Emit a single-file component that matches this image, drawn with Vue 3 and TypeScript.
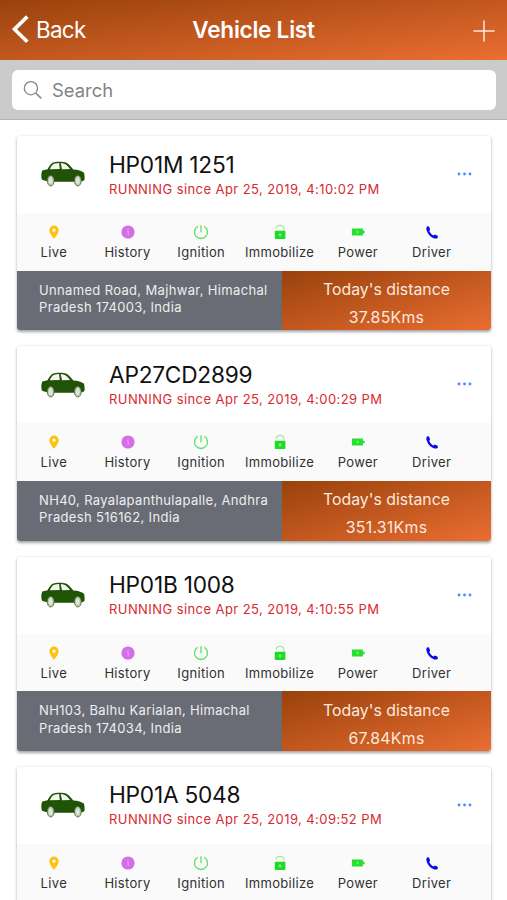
<script setup lang="ts">
interface Vehicle {
  name: string
  since: string
  address?: [string, string]
  distance?: string
}

const vehicles: Vehicle[] = [
  { name: 'HP01M 1251', since: '4:10:02 PM', address: ['Unnamed Road, Majhwar, Himachal', 'Pradesh 174003, India'], distance: '37.85Kms' },
  { name: 'AP27CD2899', since: '4:00:29 PM', address: ['NH40, Rayalapanthulapalle, Andhra', 'Pradesh 516162, India'], distance: '351.31Kms' },
  { name: 'HP01B 1008', since: '4:10:55 PM', address: ['NH103, Balhu Karialan, Himachal', 'Pradesh 174034, India'], distance: '67.84Kms' },
  { name: 'HP01A 5048', since: '4:09:52 PM' },
]

const actions: string[] = ['Live', 'History', 'Ignition', 'Immobilize', 'Power', 'Driver']
</script>

<template>
  <div class="screen">
    <header class="navbar">
      <button class="back">
        <svg width="18" height="30" viewBox="0 0 18 30"><path d="M15.300 1.600 2.500 14.200l12.800 12.600" fill="none" stroke="#fff" stroke-width="3.7" /></svg>
        <span>Back</span>
      </button>
      <h1>Vehicle List</h1>
      <button class="add">
        <svg width="22" height="22" viewBox="0 0 22 22"><path d="M11 .5v21M.5 11h21" stroke="#ffe9dc" stroke-width="1.5" /></svg>
      </button>
    </header>

    <div class="toolbar">
      <div class="search">
        <svg width="20" height="20" viewBox="0 0 20 20" fill="none" stroke="#858585" stroke-width="1.300"><circle cx="7.900" cy="8.200" r="6.600" /><path d="m12.800 13 5.400 5.400" stroke-width="1.600" /></svg>
        <span>Search</span>
      </div>
    </div>

    <main class="list">
      <article v-for="v in vehicles" :key="v.name" class="card">
        <div class="summary">
          <svg class="car" width="44" height="26" viewBox="0 0 44 26">
            <path d="M1.200 9.600 6.500 8.200C8 5.500 9.500 3.300 11.500 1.800 14 .4 22 .3 25 1.500c2.800 1.300 5.200 4.400 7.300 6.900 4.500.3 8.600 1.200 10.500 3.200.7 1.500.9 4 .8 7l-1.500 1.400-5.300.7H8L1.500 19C.3 18 .2 15.500.4 12.500Z" fill="#215306" />
            <path d="M8.800 8.300c1-2.500 2.600-4.700 4.300-5.500 1.500-.6 3.300-.8 5-.8l.7 6Zm10.900-6.300c4 .1 6.600 2 9.400 6l-8.100.2Z" fill="#f3f7f0" />
            <g fill="#b9cab1" stroke="#47703c" stroke-width=".900"><ellipse cx="9.700" cy="19.700" rx="3.400" ry="5.300" /><ellipse cx="36.800" cy="19.700" rx="3.400" ry="5.300" /></g>
            <g fill="#dfe7da"><ellipse cx="9.700" cy="19.700" rx="1.700" ry="3.300" /><ellipse cx="36.800" cy="19.700" rx="1.700" ry="3.300" /></g>
          </svg>
          <div class="title">
            <h2>{{ v.name }}</h2>
            <p>RUNNING since Apr 25, 2019, {{ v.since }}</p>
          </div>
          <svg class="more" width="15" height="4" viewBox="0 0 15 4" fill="#488aff"><circle cx="2" cy="2" r="1.400" /><circle cx="7.500" cy="2" r="1.400" /><circle cx="13" cy="2" r="1.400" /></svg>
        </div>

        <div class="actions">
          <div v-for="a in actions" :key="a" class="action">
            <svg width="16" height="16" viewBox="0 0 16 16">
              <path v-if="a === 'Live'" fill="#ffc30d" fill-rule="evenodd" d="M8 1.500a4.700 4.700 0 0 0-4.700 4.700C3.300 9.700 8 14.700 8 14.700s4.700-5 4.700-8.500A4.700 4.700 0 0 0 8 1.500Zm0 3a1.700 1.700 0 1 1 0 3.400 1.700 1.700 0 0 1 0-3.400Z" />
              <g v-else-if="a === 'History'">
                <circle cx="8" cy="8" r="6.600" fill="#d36ee8" />
                <path d="M7 6.800h1.200v4.400m-.1-6.900v1.200" fill="none" stroke="#e8a5f3" stroke-width="1" />
              </g>
              <path v-else-if="a === 'Ignition'" d="M8 1.300v6.900M4.900 2.300a6.500 6.500 0 1 0 6.200 0" fill="none" stroke="#61df67" stroke-width="1.300" />
              <g v-else-if="a === 'Immobilize'">
                <path d="M4 4.700C4.700.3 11.300.3 12 4.700v2" fill="none" stroke="#9aeb9c" stroke-width="1.100" />
                <rect x="2.800" y="6.800" width="10.600" height="8.200" rx=".8" fill="#1edc25" />
                <path d="M8 9.300v3.200M6.500 10.900h3" stroke="#94f497" stroke-width="1" />
              </g>
              <g v-else-if="a === 'Power'">
                <path d="M1.900 4.500h11v2.200h1.700v2.600h-1.700v2.200h-11Z" fill="#27df2e" />
                <path d="m8.500 6-2.800 2.300h1.700l-.6 1.700 2.800-2.300H7.900Z" fill="#85ee88" />
              </g>
              <path v-else fill="#1008e4" d="M3.400 2.200 5 2.600l1.100 3-.8 1.700c1 1.900 2.400 3.300 4.100 4.100l1.500-.8 2.700 1.200.3 1.600c-.7 1.100-2 1.400-3.500 1C6 13.100 3.100 9.200 2.300 5c0-1.200.3-2.200 1.100-2.800Z" />
            </svg>
            <span>{{ a }}</span>
          </div>
        </div>

        <footer v-if="v.address" class="bottom">
          <p class="address">{{ v.address[0] }}<br />{{ v.address[1] }}</p>
          <div class="distance">
            <span class="caption">Today's distance</span>
            <span>{{ v.distance }}</span>
          </div>
        </footer>
      </article>
    </main>
  </div>
</template>

<style>
body {
  overflow: hidden;
}
</style>

<style scoped>
.screen {
  height: 900px;
  overflow: hidden;
  background: #fff;
  font-family: Inter, "Liberation Sans", sans-serif;
  color: #111;
}
h1, h2, p {
  margin: 0;
  font-weight: 400;
}
button {
  border: 0;
  padding: 0;
  background: none;
  font: inherit;
  color: #fff;
}
svg {
  display: block;
  flex: none;
}
.navbar {
  height: 60px;
  box-sizing: border-box;
  padding: 0 12px 1px;
  display: grid;
  grid-template-columns: 1fr auto 1fr;
  align-items: center;
  background: linear-gradient(to bottom right, #99420c, #eb6e32);
  color: #fff;
}
.back {
  display: flex;
  align-items: center;
  gap: 6px;
  font-size: 22.400px;
  letter-spacing: -0.700px;
}
.navbar h1 {
  font-size: 22.600px;
  font-weight: 600;
  letter-spacing: -0.260px;
}
.add {
  justify-self: end;
  padding-top: 3px;
}
.toolbar {
  height: 60px;
  box-sizing: border-box;
  padding: 10px 11px 0 12px;
  background: #cbcbcb;
  border-bottom: 1.500px solid #b4b4b4;
}
.search {
  height: 40px;
  box-sizing: border-box;
  padding-left: 11px;
  display: flex;
  align-items: center;
  gap: 9px;
  border-radius: 6px;
  background: #fff;
  color: #848484;
  font-size: 18.400px;
}
.list {
  display: grid;
  gap: 16px;
  padding: 16px 16px 0 17px;
}
.card {
  height: 194.300px;
  display: grid;
  grid-template-rows: 77px 57.500px 1fr;
  overflow: hidden;
  border-radius: 3px;
  background: #fff;
  box-shadow: 0 1.500px 3px rgba(0, 0, 0, 0.36);
}
.summary {
  display: flex;
  padding: 0 19px 0 24px;
}
.car {
  margin-top: 25.300px;
}
.title {
  flex: 1;
  margin: 12.500px 0 0 24px;
}
.title h2 {
  font-size: 22.700px;
  line-height: 31px;
  letter-spacing: -0.240px;
  white-space: nowrap;
}
.title p {
  font-size: 13px;
  line-height: 18px;
  letter-spacing: 0.420px;
  color: #d82a31;
  white-space: nowrap;
}
.more {
  margin-top: 36px;
}
.actions {
  display: grid;
  grid-template-columns: repeat(3, 73.700px) 83px 73.700px 73.700px;
  background: #fafafa;
}
.action {
  display: flex;
  flex-direction: column;
  align-items: center;
  padding-top: 11px;
  font-size: 13px;
  line-height: 16px;
  letter-spacing: 0.330px;
  color: #303030;
}
.action span {
  margin-top: 4px;
}
.bottom {
  display: grid;
  grid-template-columns: 265px 1fr;
}
.address {
  padding: 11px 0 0 22px;
  background: #696c74;
  color: #eeeef0;
  font-size: 13px;
  line-height: 17.500px;
  letter-spacing: 0.340px;
  white-space: nowrap;
}
.distance {
  display: flex;
  flex-direction: column;
  align-items: center;
  padding-top: 5.500px;
  background: linear-gradient(to bottom right, #99420c, #eb6e32);
  color: #fbe9df;
  font-size: 15.800px;
  line-height: 28px;
  letter-spacing: 0.300px;
}
.caption {
  letter-spacing: 0.020px;
}
</style>
